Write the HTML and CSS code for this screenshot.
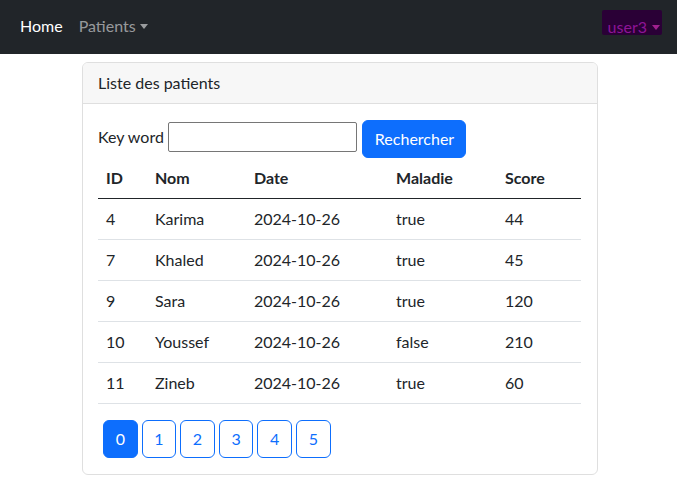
FILE: index.html
```html
<!DOCTYPE html>
<html lang="fr">
<head>
<meta charset="utf-8">
<title>Patients</title>
<link rel="stylesheet" href="styles.css">
</head>
<body>
<nav class="navbar">
  <ul class="nav">
    <li><a class="nav-link active" href="#">Home</a></li>
    <li><a class="nav-link dropdown" href="#">Patients<span class="caret"></span></a></li>
  </ul>
  <ul class="nav">
    <li><a class="nav-link user" href="#"><span class="user-name">user3</span><span class="caret"></span></a></li>
  </ul>
</nav>
<div class="container">
  <div class="card">
    <div class="card-header">Liste des patients</div>
    <div class="card-body">
      <form class="search">
        <label class="search-label">Key word</label>
        <input class="search-input" type="text">
        <button class="btn-primary" type="button">Rechercher</button>
      </form>
      <table class="table">
        <thead>
          <tr><th class="c-id">ID</th><th class="c-nom">Nom</th><th class="c-date">Date</th><th class="c-mal">Maladie</th><th class="c-score">Score</th></tr>
        </thead>
        <tbody>
          <tr><td>4</td><td>Karima</td><td>2024-10-26</td><td>true</td><td>44</td></tr>
          <tr><td>7</td><td>Khaled</td><td>2024-10-26</td><td>true</td><td>45</td></tr>
          <tr><td>9</td><td>Sara</td><td>2024-10-26</td><td>true</td><td>120</td></tr>
          <tr><td>10</td><td>Youssef</td><td>2024-10-26</td><td>false</td><td>210</td></tr>
          <tr><td>11</td><td>Zineb</td><td>2024-10-26</td><td>true</td><td>60</td></tr>
        </tbody>
      </table>
      <ul class="pagination">
        <li><a class="page-btn current" href="#">0</a></li>
        <li><a class="page-btn" href="#">1</a></li>
        <li><a class="page-btn" href="#">2</a></li>
        <li><a class="page-btn" href="#">3</a></li>
        <li><a class="page-btn" href="#">4</a></li>
        <li><a class="page-btn" href="#">5</a></li>
      </ul>
    </div>
  </div>
</div>
</body>
</html>
```
FILE: styles.css
```css
* { box-sizing: border-box; }
body {
  margin: 0;
  font-family: "Lato", "Noto Sans", sans-serif;
  font-size: 16px;
  line-height: 24px;
  color: #212529;
  background: #fff;
}
ul { list-style: none; margin: 0; padding: 0; }
a { text-decoration: none; }

.navbar {
  height: 54px;
  background: #212529;
  display: flex;
  align-items: center;
  justify-content: space-between;
  padding: 0 12px 2px;
}
.nav { display: flex; }
.nav-link {
  display: flex;
  align-items: center;
  padding: 8px;
  color: rgba(255,255,255,.55);
}
.nav-link.active { color: #fff; }
.caret {
  display: inline-block;
  margin-left: 4px;
  border-top: 5px solid currentColor;
  border-left: 4px solid transparent;
  border-right: 4px solid transparent;
}
.user {
  height: 25px;
  align-items: flex-start;
  background: #2a0036;
  color: #8e1497;
  padding: 5px 2px 0 6px;
  margin: 0 3px 7px 0;
  border-radius: 2px;
}
.user .user-name { color: #8e1497; }
.user .caret { color: #a0208f; margin: 10px 0 0 5px; }

.container { padding: 8px 79px 0 82px; }
.card {
  border: 1px solid #dfdfdf;
  border-radius: 6px;
  overflow: hidden;
}
.card-header {
  padding: 8px 15px;
  background: #f7f7f7;
  border-bottom: 1px solid #dfdfdf;
}
.card-body { padding: 16px 16px 16px 15px; }

.search { display: flex; align-items: center; margin: 0; }
.search-label { margin-right: 4px; margin-bottom: 4px; }
.search-input {
  width: 189px;
  height: 30px;
  margin-bottom: 4px;
  border: 1px solid #767676;
  border-radius: 2px;
  font: inherit;
  padding: 2px 4px;
}
.btn-primary {
  margin-left: 5px;
  height: 38px;
  width: 104px;
  padding: 0 12px;
  border: 1px solid #0d6efd;
  background: #0d6efd;
  color: #fff;
  border-radius: 6px;
  font: inherit;
}

.table {
  width: 100%;
  border-collapse: collapse;
  margin-bottom: 16px;
  table-layout: fixed;
}
.table th, .table td {
  text-align: left;
  padding: 8px;
  border-bottom: 1px solid #dee2e6;
}
.table th { font-weight: 700; border-bottom: 1px solid #212529; height: 40px; }
.c-id { width: 49px; }
.c-nom { width: 99px; }
.c-date { width: 142px; }
.c-mal { width: 109px; }
.c-score { width: 84px; }

.pagination { display: flex; gap: 4px; padding-left: 5px; }
.page-btn {
  display: flex;
  align-items: center;
  justify-content: center;
  width: 34.6px;
  height: 38px;
  border: 1px solid #0d6efd;
  border-radius: 6px;
  color: #0d6efd;
}
.page-btn.current { background: #0d6efd; color: #fff; }
```
